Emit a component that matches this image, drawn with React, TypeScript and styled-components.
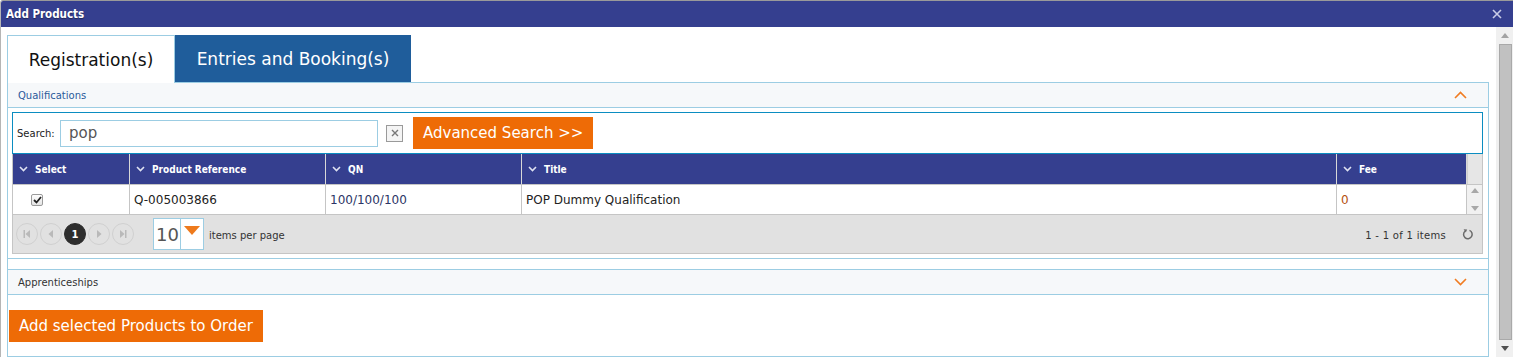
import styled, { createGlobalStyle } from 'styled-components';

const GlobalStyle = createGlobalStyle`
  html, body { margin: 0; padding: 0; background: #fff; }
  body { font-family: "DejaVu Sans", Verdana, sans-serif; color: #333; }
  * { box-sizing: border-box; }
`;

const NAVY = '#353f8f';
const ORANGE = '#ee6b06';
const LIGHT_BLUE = '#9ccde3';

interface Column {
  title: string;
  width: number;
}

const columns: Column[] = [
  { title: 'Select', width: 117 },
  { title: 'Product Reference', width: 196 },
  { title: 'QN', width: 196 },
  { title: 'Title', width: 815 },
  { title: 'Fee', width: 130 },
];

const rows = [
  { ref: 'Q-005003866', qn: '100/100/100', title: 'POP Dummy Qualification', fee: '0', checked: true },
];

export default function App(): JSX.Element {
  return (
    <>
      <GlobalStyle />
      <Dialog>
        <TitleBar>
          <Title>Add Products</Title>
          <CloseIcon />
        </TitleBar>
        <Body>
          <Content>
            <TabStrip>
              <Tab active>Registration(s)</Tab>
              <Tab>Entries and Booking(s)</Tab>
            </TabStrip>
            <TabPanel>
              <Section>
                <SectionHeader>
                  <span>Qualifications</span>
                  <Chevron up />
                </SectionHeader>
                <SectionBody>
                  <SearchBar>
                    <SearchLabel>Search:</SearchLabel>
                    <SearchInput defaultValue="pop" />
                    <ClearButton>
                      <svg width="10" height="10" viewBox="0 0 10 10">
                        <path d="M2 2 L8 8 M8 2 L2 8" stroke="#777" strokeWidth="1.4" />
                      </svg>
                    </ClearButton>
                    <OrangeButton small>Advanced Search &gt;&gt;</OrangeButton>
                  </SearchBar>
                  <Grid>
                    <GridHeader>
                      {columns.map((c) => (
                        <HeaderCell key={c.title} style={{ width: c.width }}>
                          <svg width="9" height="6" viewBox="0 0 9 6">
                            <path d="M1 1 L4.5 4.5 L8 1" stroke="#dfe2f2" strokeWidth="1.6" fill="none" />
                          </svg>
                          {c.title}
                        </HeaderCell>
                      ))}
                      <ScrollGap />
                    </GridHeader>
                    {rows.map((r) => (
                      <GridRow key={r.ref}>
                        <Cell style={{ width: columns[0].width }} center>
                          <CheckBox>{r.checked && <CheckMark />}</CheckBox>
                        </Cell>
                        <Cell style={{ width: columns[1].width }}>{r.ref}</Cell>
                        <Cell style={{ width: columns[2].width }} tone="#2c3566">{r.qn}</Cell>
                        <Cell style={{ width: columns[3].width }}>{r.title}</Cell>
                        <Cell style={{ width: columns[4].width }} tone="#b5500f">{r.fee}</Cell>
                        <RowScroll>
                          <Tri up />
                          <Tri />
                        </RowScroll>
                      </GridRow>
                    ))}
                    <Pager>
                      <PagerNav>
                        <PageBtn><PagerIcon kind="first" /></PageBtn>
                        <PageBtn><PagerIcon kind="prev" /></PageBtn>
                        <PageBtn active>1</PageBtn>
                        <PageBtn><PagerIcon kind="next" /></PageBtn>
                        <PageBtn><PagerIcon kind="last" /></PageBtn>
                      </PagerNav>
                      <PageSize>
                        <PageSizeValue>10</PageSizeValue>
                        <PageSizeArrow>
                          <svg width="16" height="9" viewBox="0 0 16 9">
                            <path d="M0 0 H16 L8 9 Z" fill="#ee7a1c" />
                          </svg>
                        </PageSizeArrow>
                      </PageSize>
                      <PagerText>items per page</PagerText>
                      <PagerInfo>1 - 1 of 1 items</PagerInfo>
                      <Refresh />
                    </Pager>
                  </Grid>
                </SectionBody>
              </Section>
              <Section collapsed>
                <SectionHeader dark>
                  <span>Apprenticeships</span>
                  <Chevron />
                </SectionHeader>
              </Section>
              <OrangeButton>Add selected Products to Order</OrangeButton>
            </TabPanel>
          </Content>
          <Scrollbar>
            <ScrollArrow>
              <svg width="8" height="5" viewBox="0 0 8 5"><path d="M0 5 L4 0 L8 5 Z" fill="#a3a3a3" /></svg>
            </ScrollArrow>
            <Thumb />
            <ScrollArrow>
              <svg width="8" height="5" viewBox="0 0 8 5"><path d="M0 0 L4 5 L8 0 Z" fill="#505050" /></svg>
            </ScrollArrow>
          </Scrollbar>
        </Body>
      </Dialog>
    </>
  );
}

const CloseIcon = () => (
  <svg width="10" height="10" viewBox="0 0 10 10">
    <path d="M1 1 L9 9 M9 1 L1 9" stroke="#c9cce6" strokeWidth="1.6" />
  </svg>
);

const Chevron = ({ up }: { up?: boolean }) => (
  <svg width="13" height="8" viewBox="0 0 13 8">
    <path d={up ? 'M1 7 L6.5 1.5 L12 7' : 'M1 1 L6.5 6.5 L12 1'} stroke="#f07c22" strokeWidth="1.6" fill="none" />
  </svg>
);

const CheckMark = () => (
  <svg width="9" height="8" viewBox="0 0 9 8">
    <path d="M1 4 L3.5 6.5 L8 1" stroke="#222" strokeWidth="1.8" fill="none" />
  </svg>
);

const PagerIcon = ({ kind }: { kind: 'first' | 'prev' | 'next' | 'last' }) => {
  const fill = '#b9b9b9';
  if (kind === 'first')
    return (
      <svg width="8" height="8" viewBox="0 0 8 8">
        <rect x="0.5" y="0" width="1.5" height="8" fill={fill} />
        <path d="M7 0 V8 L2.5 4 Z" fill={fill} />
      </svg>
    );
  if (kind === 'prev')
    return (
      <svg width="6" height="8" viewBox="0 0 6 8">
        <path d="M5 0 V8 L0.5 4 Z" fill={fill} />
      </svg>
    );
  if (kind === 'next')
    return (
      <svg width="6" height="8" viewBox="0 0 6 8">
        <path d="M1 0 V8 L5.5 4 Z" fill={fill} />
      </svg>
    );
  return (
    <svg width="8" height="8" viewBox="0 0 8 8">
      <path d="M1 0 V8 L5.5 4 Z" fill={fill} />
      <rect x="6" y="0" width="1.5" height="8" fill={fill} />
    </svg>
  );
};

const Refresh = () => (
  <RefreshWrap>
    <svg width="12" height="12" viewBox="0 0 12 12">
      <path d="M7.5 2.4 A4.3 4.3 0 1 1 3.2 3" stroke="#6b6b6b" strokeWidth="1.5" fill="none" />
      <path d="M1.6 1.2 L5.2 1.4 L3.8 4.6 Z" fill="#6b6b6b" />
    </svg>
  </RefreshWrap>
);

const Dialog = styled.div`
  width: 1513px;
  height: 357px;
  display: flex;
  flex-direction: column;
  overflow: hidden;
  border-top: 1px solid #9a9a9a;
  border-left: 1px solid #b5b5b5;
  border-top-left-radius: 3px;
`;

const TitleBar = styled.div`
  height: 26px;
  flex: none;
  background: ${NAVY};
  display: flex;
  align-items: center;
  justify-content: space-between;
  padding: 0 11px 0 5px;
`;

const Title = styled.span`
  font-family: "DejaVu Sans Condensed", "DejaVu Sans", sans-serif;
  font-weight: bold;
  font-size: 11.5px;
  color: #fff;
  text-shadow: 0 1px 1px rgba(0, 0, 0, 0.4);
`;

const Body = styled.div`
  flex: 1;
  display: flex;
  min-height: 0;
`;

const Content = styled.div`
  flex: 1;
  padding: 8px 7px 0 6px;
  overflow: hidden;
`;

const TabStrip = styled.div`
  display: flex;
  height: 47px;
`;

const Tab = styled.div<{ active?: boolean }>`
  display: flex;
  align-items: center;
  justify-content: center;
  font-size: 17px;
  padding: 0 16px;
  width: ${({ active }) => (active ? '168px' : '236px')};
  background: ${({ active }) => (active ? '#fff' : '#1f5d9b')};
  color: ${({ active }) => (active ? '#111' : '#fff')};
  border: 1px solid ${({ active }) => (active ? LIGHT_BLUE : '#1f5d9b')};
  border-bottom: none;
  position: relative;
  z-index: ${({ active }) => (active ? 1 : 0)};
  margin-bottom: ${({ active }) => (active ? '-1px' : '0')};
  height: ${({ active }) => (active ? '48px' : '47px')};
`;

const TabPanel = styled.div`
  border: 1px solid ${LIGHT_BLUE};
  height: 275px;
  display: flex;
  flex-direction: column;
  align-items: flex-start;
`;

const Section = styled.div<{ collapsed?: boolean }>`
  align-self: stretch;
  border-bottom: 1px solid ${LIGHT_BLUE};
  margin-bottom: ${({ collapsed }) => (collapsed ? '15px' : '10px')};
  border-top: ${({ collapsed }) => (collapsed ? `1px solid ${LIGHT_BLUE}` : 'none')};
`;

const SectionHeader = styled.div<{ dark?: boolean }>`
  height: ${({ dark }) => (dark ? '24px' : '25px')};
  background: #f6f8fa;
  border-bottom: ${({ dark }) => (dark ? 'none' : `1px solid ${LIGHT_BLUE}`)};
  display: flex;
  align-items: center;
  justify-content: space-between;
  padding: 0 21px 0 10px;
  font-size: 10px;
  color: ${({ dark }) => (dark ? '#333' : '#2a5a9a')};
`;

const SectionBody = styled.div`
  padding: 4px 5px 4px 4px;
`;

const SearchBar = styled.div`
  height: 42px;
  border: 1px solid #0b8dc1;
  display: flex;
  align-items: center;
  padding-left: 4px;
`;

const SearchLabel = styled.span`
  font-size: 10px;
  color: #222;
  width: 43px;
`;

const SearchInput = styled.input`
  width: 318px;
  height: 27px;
  border: 1px solid ${LIGHT_BLUE};
  padding: 0 8px;
  font-family: "DejaVu Sans", sans-serif;
  font-size: 15px;
  color: #555;
  outline: none;
`;

const ClearButton = styled.span`
  width: 17px;
  height: 17px;
  margin-left: 8px;
  border: 1px solid #9a9a9a;
  display: flex;
  align-items: center;
  justify-content: center;
  background: #f4f4f4;
`;

const OrangeButton = styled.button<{ small?: boolean }>`
  background: ${ORANGE};
  color: #fff;
  border: none;
  font-family: "DejaVu Sans", sans-serif;
  font-size: 15px;
  height: 32px;
  padding: 0 10px;
  margin-left: ${({ small }) => (small ? '10px' : '1px')};
  cursor: pointer;
`;

const Grid = styled.div`
  border: 1px solid #c5c5c5;
  border-top: none;
  background: #fff;
`;

const GridHeader = styled.div`
  height: 30px;
  display: flex;
  background: ${NAVY};
`;

const HeaderCell = styled.div`
  display: flex;
  align-items: center;
  gap: 7px;
  padding-left: 6px;
  border-right: 1px solid #d8d8d8;
  font-family: "DejaVu Sans Condensed", "DejaVu Sans", sans-serif;
  font-weight: bold;
  font-size: 10px;
  color: #fff;
`;

const ScrollGap = styled.div`
  flex: 1;
  background: #e6e6e6;
  border-left: 1px solid #d0d0d0;
`;

const GridRow = styled.div`
  height: 31px;
  display: flex;
  border-top: 1px solid #c5c5c5;
  border-bottom: 1px solid #c5c5c5;
`;

const Cell = styled.div<{ center?: boolean; tone?: string }>`
  display: flex;
  align-items: center;
  padding-left: ${({ center }) => (center ? '18px' : '4px')};
  border-right: 1px solid #c5c5c5;
  font-size: 12px;
  color: ${({ tone }) => tone ?? '#222'};
`;

const CheckBox = styled.span`
  width: 12px;
  height: 12px;
  border: 1px solid #9a9a9a;
  border-radius: 2px;
  background: linear-gradient(#fdfdfd, #e4e4e4);
  display: flex;
  align-items: center;
  justify-content: center;
`;

const RowScroll = styled.div`
  flex: 1;
  background: #f1f1f1;
  display: flex;
  flex-direction: column;
  align-items: center;
  justify-content: space-between;
  padding: 3px 0;
`;

const Tri = styled.span<{ up?: boolean }>`
  width: 0;
  height: 0;
  border-left: 4px solid transparent;
  border-right: 4px solid transparent;
  ${({ up }) => (up ? 'border-bottom: 5px solid #a8a8a8;' : 'border-top: 5px solid #a8a8a8;')}
`;

const Pager = styled.div`
  height: 38px;
  background: #e1e1e1;
  display: flex;
  align-items: center;
  padding: 0 8px 0 3px;
  font-size: 10px;
  color: #333;
`;

const PagerNav = styled.div`
  display: flex;
  gap: 2px;
`;

const PageBtn = styled.span<{ active?: boolean }>`
  width: 22px;
  height: 22px;
  border-radius: 50%;
  border: 1px solid ${({ active }) => (active ? '#2d2d2d' : '#d0d0d0')};
  background: ${({ active }) => (active ? '#2d2d2d' : 'transparent')};
  color: #fff;
  font-weight: bold;
  font-size: 10px;
  display: flex;
  align-items: center;
  justify-content: center;
`;

const PageSize = styled.div`
  margin-left: 19px;
  width: 51px;
  height: 32px;
  border: 1px solid ${LIGHT_BLUE};
  background: #fff;
  display: flex;
`;

const PageSizeValue = styled.span`
  width: 27px;
  border-right: 1px solid ${LIGHT_BLUE};
  font-size: 18px;
  color: #555;
  display: flex;
  align-items: center;
  justify-content: flex-end;
  padding-right: 1px;
`;

const PageSizeArrow = styled.span`
  flex: 1;
  display: flex;
  justify-content: center;
  padding-top: 7px;
`;

const PagerText = styled.span`
  margin-left: 5px;
  margin-top: 2px;
`;

const PagerInfo = styled.span`
  margin-left: auto;
  margin-top: 2px;
  letter-spacing: 0.3px;
`;

const RefreshWrap = styled.span`
  margin-left: 16px;
  display: flex;
`;

const Scrollbar = styled.div`
  width: 17px;
  flex: none;
  background: #f0f0f0;
  display: flex;
  flex-direction: column;
  align-items: center;
  padding: 0 0 0 1px;
`;

const ScrollArrow = styled.div`
  height: 17px;
  display: flex;
  align-items: center;
  justify-content: center;
`;

const Thumb = styled.div`
  flex: 1;
  width: 13px;
  background: #c1c1c1;
  border: 1px solid #a9a9a9;
`;
